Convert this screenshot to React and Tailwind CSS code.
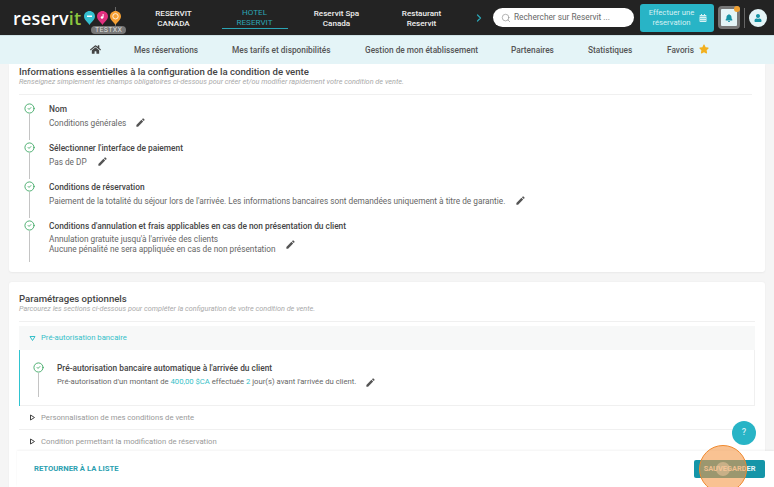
import React from 'react';
import { Search, ChevronRight, CircleCheck } from 'lucide-react';
import { FaHome, FaStar, FaBell, FaUser, FaCalendarAlt } from 'react-icons/fa';
import { MdEdit } from 'react-icons/md';

const Pin = ({ color, children }) => (
  <svg width="11" height="14" viewBox="0 0 11 14">
    <path d="M5.5 0C2.5 0 0 2.3 0 5.3 0 8.8 3.5 11 5.5 14 7.5 11 11 8.8 11 5.3 11 2.3 8.5 0 5.5 0Z" fill={color} />
    {children}
  </svg>
);

const Logo = () => (
  <div className="relative flex h-[35px] w-[115px] items-center pl-[13px]">
    <span className="font-['Open_Sans'] text-[18px] leading-none font-semibold tracking-[0.2px] text-white">
      reserv<span className="text-[#8dc63f]">it</span>
    </span>
    <div className="ml-[3px] flex gap-[2px]">
      <Pin color="#35bfd0"><rect x="3" y="4.5" width="5" height="1.5" fill="#fff" /></Pin>
      <Pin color="#e0307f"><circle cx="5" cy="6.5" r="1.3" fill="#fff" /><rect x="5.6" y="3" width="1" height="3.5" fill="#fff" /></Pin>
      <Pin color="#f5a034"><circle cx="5.5" cy="5.3" r="2.7" fill="none" stroke="#fff" strokeWidth="0.8" /></Pin>
    </div>
    <span className="absolute top-[26px] left-[91px] rounded-full bg-[#777] px-[4px] text-[7px] leading-[8px] tracking-[0.3px] text-[#ddd]">TESTXX</span>
  </div>
);

const HeaderLink = ({ lines, active, width }) => (
  <div className={`${width} flex justify-center`}>
    <div className={`w-[66px] text-center text-[8.1px] leading-[10px] ${active ? 'border-b border-[#2ba5b5] pb-[1px] text-[#2ba5b5]' : 'font-medium text-[#eee]'}`}>
      <div>{lines[0]}</div>
      <div>{lines[1]}</div>
    </div>
  </div>
);

const Header = () => (
  <header className="relative flex h-[35px] shrink-0 items-center bg-[#232323]">
    <Logo />
    <div className="h-[22px] w-px bg-[#666]" />
    <div className="ml-[17px] flex items-center">
      <HeaderLink width="w-[81px]" lines={['RESERVIT', 'CANADA']} />
      <HeaderLink width="w-[81px]" lines={['HOTEL', 'RESERVIT']} active />
      <HeaderLink width="w-[83px]" lines={['Reservit Spa', 'Canada']} />
      <HeaderLink width="w-[87px]" lines={['Restaurant', 'Reservit']} />
    </div>
    <ChevronRight className="ml-[8px] text-[#2ba5b5]" size={12} strokeWidth={2.5} />
    <div className="ml-[8px] flex h-[19px] w-[141px] items-center rounded-full bg-white pl-[8px] text-[8.3px] text-[#666]">
      <Search size={10} strokeWidth={1.5} className="text-[#888]" />
      <span className="ml-[3px]">Rechercher sur Reservit ...</span>
    </div>
    <div className="ml-[6px] flex h-[28px] w-[74px] items-center justify-center gap-[3px] rounded-[3px] bg-[#28b4c6] text-center text-[7.7px] leading-[10px] text-[#d7f1f4]">
      <span className="w-[48px]">Effectuer une réservation</span>
      <FaCalendarAlt size={8} />
    </div>
    <div className="relative ml-[4px] flex h-[23px] w-[22px] items-center justify-center rounded-[4px] border-[3px] border-[#777] bg-[#e4f4f7] text-[#1593a5]">
      <FaBell size={8} />
      <span className="absolute -top-[3px] -right-[3px] h-[6px] w-[6px] rounded-full bg-[#f0a030]" />
    </div>
    <div className="mx-[4px] h-[20px] w-px bg-[#666]" />
    <div className="flex h-[18px] w-[18px] items-center justify-center rounded-full bg-[#e4f4f7] text-[#1593a5]">
      <FaUser size={8} />
    </div>
  </header>
);

const navLabels = [
  { label: 'Mes réservations', width: 'w-[98px]' },
  { label: 'Mes tarifs et disponibilités', width: 'w-[133px]' },
  { label: 'Gestion de mon établissement', width: 'w-[146px]' },
  { label: 'Partenaires', width: 'w-[77px]' },
  { label: 'Statistiques', width: 'w-[79px]' },
];

const Nav = () => (
  <nav className="flex h-[29px] shrink-0 items-center border-t border-[#cfe3e7] bg-[#e4f4f7] pl-[90px] text-[8.3px] font-medium text-[#555]">
    <FaHome size={11} className="mr-[33px] -mt-[1px] text-[#444]" />
    {navLabels.map((item) => (
      <span key={item.label} className={`${item.width} shrink-0 whitespace-nowrap`}>{item.label}</span>
    ))}
    <span>Favoris</span>
    <FaStar size={10} className="ml-[5px] -mt-[2px] text-[#f2b01e]" />
  </nav>
);

const Pencil = ({ className }) => <MdEdit size={11} className={`text-[#555] ${className}`} />;

const conditions = [
  { title: 'Nom', lines: ['Conditions générales'], pencil: 'ml-[9px]' },
  { title: "Sélectionner l'interface de paiement", lines: ['Pas de DP'], pencil: 'ml-[10px]' },
  { title: 'Conditions de réservation', lines: ["Paiement de la totalité du séjour lors de l'arrivée. Les informations bancaires sont demandées uniquement à titre de garantie."], pencil: 'ml-[10px]' },
  { title: "Conditions d'annulation et frais applicables en cas de non présentation du client", lines: ["Annulation gratuite jusqu'à l'arrivée des clients", 'Aucune pénalité ne sera appliquée en cas de non présentation'], pencil: 'ml-[9px]' },
];

const Condition = ({ item, last }) => (
  <div className={`relative flex ${last ? 'h-[44px]' : 'h-[39px]'}`}>
    <div className="flex w-[21px] shrink-0 flex-col items-center">
      <CircleCheck size={11} strokeWidth={2} className="mt-[2px] shrink-0 text-[#3fa866]" />
      <div className="w-px grow bg-[#c4c4c4]" />
    </div>
    <div className="pl-[9px]">
      <div className="pt-[3px] text-[8.35px] leading-[10px] font-medium text-[#444]">{item.title}</div>
      <div className="mt-[3px] flex items-center text-[8.25px] leading-[10px] text-[#666]">
        <div>
          {item.lines.map((line) => <div key={line}>{line}</div>)}
        </div>
        <Pencil className={item.pencil} />
      </div>
    </div>
  </div>
);

const SectionHead = ({ title, sub }) => (
  <div className="border-b border-[#f0f0f0] pb-[8px]">
    <div className="text-[9.6px] leading-[10px] font-medium text-[#444]">{title}</div>
    <div className="text-[7.3px] leading-[9px] text-[#aaa] italic">{sub}</div>
  </div>
);

const Triangle = ({ open }) => (
  <svg width="7" height="7" viewBox="0 0 7 7" className={open ? 'text-[#35bfc8]' : 'text-[#444]'}>
    <path d={open ? 'M1 1.5h5L3.5 5.5Z' : 'M1.5 1v5L5.5 3.5Z'} fill="none" stroke="currentColor" strokeWidth="1" />
  </svg>
);

const AccordionRow = ({ label }) => (
  <div className="flex h-[24px] items-center gap-[5px] border-b border-[#f0f0f0] pl-[10px] text-[7.7px] text-[#999]">
    <Triangle />
    <span>{label}</span>
  </div>
);

const Footer = () => (
  <div className="absolute right-0 bottom-0 left-[17px] flex h-[36px] items-center justify-between bg-white pr-[9px] pl-[17px] shadow-[0_-1px_2px_rgba(0,0,0,0.05)]">
    <span className="text-[7.7px] font-bold text-[#2ba0b0]">RETOURNER À LA LISTE</span>
    <div className="flex h-[18px] w-[71px] items-center justify-center rounded-[2px] bg-[#1595a8] text-[7.4px] font-bold text-[#e8f6f8]">SAUVEGARDER</div>
  </div>
);

export default function App() {
  return (
    <div className="relative flex h-[487px] w-[774px] flex-col overflow-hidden bg-[#f5f5f5] font-['Roboto',sans-serif]">
      <Header />
      <Nav />
      <main className="flex flex-col gap-[10px] px-[9px]">
        <section className="h-[208px] rounded-b-[3px] bg-white pt-[3px] pr-[13px] pl-[10px] shadow-[0_1px_2px_rgba(0,0,0,0.05)]">
          <SectionHead
            title="Informations essentielles à la configuration de la condition de vente"
            sub="Renseignez simplement les champs obligatoires ci-dessous pour créer et/ou modifier rapidement votre condition de vente."
          />
          <div className="mt-[6px]">
            {conditions.map((item, i) => (
              <Condition key={item.title} item={item} last={i === conditions.length - 1} />
            ))}
          </div>
        </section>
        <section className="h-[210px] rounded-t-[3px] bg-white pt-[12px] pr-[10px] pl-[10px] shadow-[0_0_2px_rgba(0,0,0,0.05)]">
          <SectionHead
            title="Paramétrages optionnels"
            sub="Parcourez les sections ci-dessous pour compléter la configuration de votre condition de vente."
          />
          <div className="mt-[4px]">
            <div className="flex h-[24px] items-center gap-[5px] bg-[#f7f8f8] pl-[10px] text-[7.7px] text-[#35bfc8]">
              <Triangle open />
              <span>Pré-autorisation bancaire</span>
            </div>
            <div className="flex h-[56px] shadow-[inset_-1px_-1px_0_#f0f0f0]">
              <div className="w-px bg-[#2fc4d0]" />
              <div className="flex pt-[12px] pl-[13px]">
                <div className="flex h-[35px] w-[10px] shrink-0 flex-col items-center">
                  <CircleCheck size={11} strokeWidth={2} className="shrink-0 text-[#3fa866]" />
                  <div className="w-px grow bg-[#c4c4c4]" />
                </div>
                <div className="pl-[14px]">
                  <div className="text-[8.35px] leading-[12px] font-medium text-[#444]">Pré-autorisation bancaire automatique à l'arrivée du client</div>
                  <div className="mt-[2px] flex items-center text-[7.7px] leading-[12px] text-[#666]">
                    <span>Pré-autorisation d'un montant de <span className="text-[#35bfc8]">400,00 $CA</span> effectuée <span className="text-[#35bfc8]">2</span> jour(s) avant l'arrivée du client.</span>
                    <Pencil className="ml-[9px]" />
                  </div>
                </div>
              </div>
            </div>
            <AccordionRow label="Personnalisation de mes conditions de vente" />
            <AccordionRow label="Condition permettant la modification de réservation" />
          </div>
        </section>
      </main>
      <Footer />
      <div className="absolute top-[421px] left-[732px] flex h-[24px] w-[24px] items-center justify-center rounded-full bg-[#28b4c6] text-[9px] font-medium text-[#d7f1f4]">?</div>
      <div className="absolute top-[445px] left-[699px] flex h-[48px] w-[48px] items-center justify-center rounded-full border-[1.5px] border-[#f0892e] bg-[#f59a4a]/60">
        <div className="h-[14px] w-[14px] rounded-full bg-[#f7c9a0]/50" />
      </div>
    </div>
  );
}
